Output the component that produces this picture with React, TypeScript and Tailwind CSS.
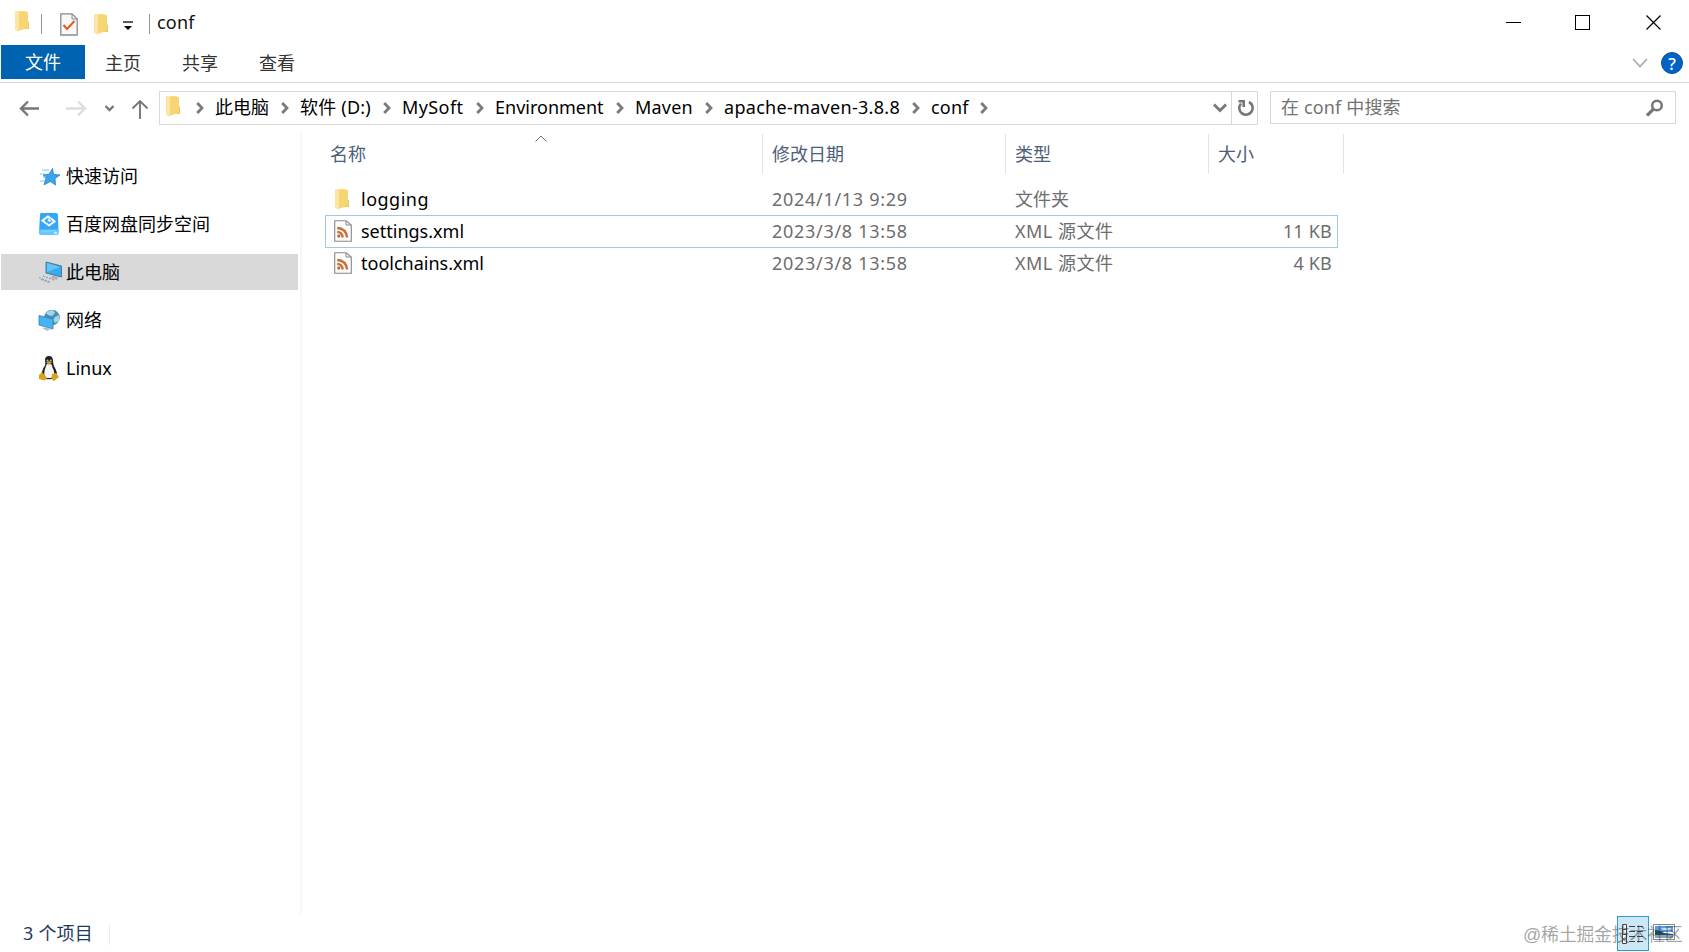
import type { ReactNode } from 'react'

const FONT = "font-['Noto_Sans','Noto_Sans_CJK_SC',sans-serif]"

function FolderIcon() {
  return (
    <svg width="16" height="21" viewBox="0 0 16 21" className="shrink-0">
      <path d="M1 0H12V16L4 19H1Z" fill="#f9dd87" />
      <path d="M11 9L15 11V18H9Z" fill="#efc75e" />
      <path d="M5 1H14V17L4 20Z" fill="#f6d573" />
      <path d="M1 0H5V17L4 21L1 18Z" fill="#fde6a5" />
    </svg>
  )
}

function CheckDocIcon() {
  return (
    <svg width="18" height="23" viewBox="0 0 18 23" className="shrink-0">
      <path d="M.8.8H12L17.2 6V22H.8Z" fill="#f8f8f8" stroke="#8b8b8b" strokeWidth="1.3" />
      <path d="M12 1V6H17" fill="none" stroke="#8b8b8b" />
      <path d="M3.5 12L7 16L14.5 8" fill="none" stroke="#e35a1c" strokeWidth="2" />
    </svg>
  )
}

function XmlIcon() {
  return (
    <svg width="18" height="22" viewBox="0 0 18 22" className="shrink-0">
      <path d="M.7.7H12L17.3 5V21.3H.7Z" fill="#fcfcfc" stroke="#85898d" strokeWidth="1.1" />
      <path d="M12 1V5H17" fill="none" stroke="#85898d" />
      <circle cx="4.8" cy="16" r="1.7" fill="#c96f35" />
      <path d="M3.2 11.8Q8 12 8.8 17.5M3.2 8Q12 8.5 13.2 17.5" fill="none" stroke="#c96f35" strokeWidth="2.3" />
    </svg>
  )
}

function StarIcon() {
  return (
    <svg width="22" height="22" viewBox="0 0 22 22" className="ml-px mt-px">
      <path d="M13.5 2.5L14.5 8.3L21 9L16 12.6L16.5 19L11.5 15.6L5 18.8L7 12.6L4.2 9L10 8.3Z" fill="#3aa5ee" stroke="#2380c9" strokeWidth=".8" />
      <path d="M3 4H10M1 8H6M4 11H7M1 15H6" stroke="#7cc4f2" strokeWidth="1" />
    </svg>
  )
}

function DriveIcon() {
  return (
    <svg width="22" height="24" viewBox="0 0 22 24">
      <path d="M3 1H18Q20 1 20 3L20.5 20Q20.5 23 18 23H4Q1 23 1 20L2 3Q2 1 3 1Z" fill="#35a7fb" />
      <path d="M1 17.5H20.5V20Q20.5 23 18 23H4Q1 23 1 20Z" fill="#65c7ff" />
      <path d="M12.5 6.5L10 4.5L4.5 8.5L8 11.5M8.5 11.5L11 13.5L16.5 9.5L13 6.5M10 7.5L12.5 9.5" fill="none" stroke="white" strokeWidth="2" />
      <path d="M3 19H18" stroke="#9adcff" strokeWidth=".8" />
      <path d="M16 21H19" stroke="white" strokeWidth="1.2" />
    </svg>
  )
}

function PcIcon() {
  return (
    <svg width="24" height="24" viewBox="0 0 24 24">
      <path d="M8 2L23.5 6V17L8 13Z" fill="#36aaf4" stroke="#4c6f86" strokeWidth=".9" />
      <path d="M9 3L22 7L9 12Z" fill="#64c5fb" />
      <path d="M14 15.5V17.5L11 17.5L19 20L20 17Z" fill="#aab2b8" />
      <path d="M1 17.5L12 22M5 16L17 20.5M3 19.5L11 22.5" fill="none" stroke="#8c959c" strokeDasharray="2 1.2" />
    </svg>
  )
}

function NetworkIcon() {
  return (
    <svg width="23" height="24" viewBox="0 0 23 24">
      <circle cx="14" cy="9.5" r="7.8" fill="#4b8fb5" />
      <path d="M8 5Q11 2 15 2L17 5L14 8L10 7ZM17 9L21 7L21 13L17 15L15 12Z" fill="#9fd7e6" />
      <path d="M1 7.5L15 11V21L1 17Z" fill="#45b3f5" stroke="#347fae" strokeWidth=".8" />
      <path d="M4 20L8 19.5L13 21L9 23Z" fill="#b6bec3" />
    </svg>
  )
}

function TuxIcon() {
  return (
    <svg width="22" height="25" viewBox="0 0 22 25">
      <path d="M7 4Q7 0 11 0Q15 0 15 5Q15 9 17 12Q20 17 18 20Q14 24 11 23Q7 24 4 20Q3 16 6 11Q8 9 7 4Z" fill="#202124" />
      <path d="M8.5 8.5Q11 7 13.5 8.5Q14.5 12 16 15Q17 20 13 22H8Q5 18 7 13Z" fill="#f4f4f4" />
      <path d="M8 6.5L11 5L14 6.5L11 9Z" fill="#d69b20" />
      <circle cx="9.5" cy="4.5" r="1" fill="#bbb" />
      <circle cx="12.8" cy="4.5" r="1" fill="#bbb" />
      <path d="M1 19L4 16L9 22Q8 25 5 24L1 23ZM14 18L18 17L21 21L16 25Q13 24 14 18Z" fill="#d9a21b" />
    </svg>
  )
}

function Chevron() {
  return (
    <svg width="8" height="12" viewBox="0 0 8 12" className="shrink-0">
      <path d="M1.2 1L6 6L1.2 11" fill="none" stroke="#7a7a7a" strokeWidth="2.8" />
    </svg>
  )
}

// Widths are the text slot plus the gap up to the next chevron
const CRUMBS = [
  { name: '此电脑', size: 'w-[85px]' },
  { name: '软件 (D:)', size: 'w-[102px] tracking-[.2px]' },
  { name: 'MySoft', size: 'w-[93px] tracking-[.4px]' },
  { name: 'Environment', size: 'w-[140px]' },
  { name: 'Maven', size: 'w-[89px] tracking-[.2px]' },
  { name: 'apache-maven-3.8.8', size: 'w-[207px] tracking-[.3px]' },
  { name: 'conf', size: 'w-[68px] tracking-[.2px]' },
]

const SIDEBAR: { name: string; icon: ReactNode; active?: boolean }[] = [
  { name: '快速访问', icon: <StarIcon /> },
  { name: '百度网盘同步空间', icon: <DriveIcon /> },
  { name: '此电脑', icon: <PcIcon />, active: true },
  { name: '网络', icon: <NetworkIcon /> },
  { name: 'Linux', icon: <TuxIcon /> },
]

const FILES = [
  { name: 'logging', tracking: 'tracking-[.5px]', date: '2024/1/13 9:29', type: '文件夹', size: '', folder: true },
  { name: 'settings.xml', tracking: '', date: '2023/3/8 13:58', type: 'XML 源文件', size: '11 KB', selected: true },
  { name: 'toolchains.xml', tracking: '', date: '2023/3/8 13:58', type: 'XML 源文件', size: '4 KB' },
]

function TitleBar() {
  return (
    <header className="flex h-[45px] items-center">
      <div className="flex h-full flex-1 items-center pb-px">
        <div className="ml-[14px] flex h-[22px]"><FolderIcon /></div>
        <div className="ml-[11px] mt-1 h-5 w-px bg-[#909090]" />
        <div className="ml-[18px] mt-1 flex"><CheckDocIcon /></div>
        <div className="ml-[15px] mt-1 flex"><FolderIcon /></div>
        <svg width="10" height="10" viewBox="0 0 10 10" className="ml-[14px] mt-2">
          <path d="M0 1H10" stroke="black" strokeWidth="1.3" />
          <path d="M1 5H9L5 9Z" fill="black" />
        </svg>
        <div className="ml-4 mt-1 h-5 w-px bg-[#909090]" />
        <span className="ml-[7px] tracking-[.2px]">conf</span>
      </div>
      <svg width="156" height="18" viewBox="0 0 156 18" className="mr-[27px] mb-px" fill="none" stroke="black">
        <path d="M0 9.5H15M69.5 2.5H83.5V16.5H69.5Z" shapeRendering="crispEdges" />
        <path d="M140.5 2.5L154.5 16.5M154.5 2.5L140.5 16.5" strokeWidth="1.2" />
      </svg>
    </header>
  )
}

function RibbonTabs() {
  return (
    <nav className="flex h-[38px] border-b border-[#dadbdc] text-[#333]">
      <div className="ml-px flex h-[34px] w-[84px] items-center justify-center bg-[#0063b1] text-white">文件</div>
      <div className="flex h-[36px] items-center gap-[41px] pl-[20px]">
        <span>主页</span>
        <span>共享</span>
        <span>查看</span>
      </div>
      <div className="ml-auto flex h-[36px] items-center gap-[13px] pr-[6px]">
        <svg width="16" height="10" viewBox="0 0 16 10"><path d="M1 1L8 8.5L15 1" fill="none" stroke="#aaa" strokeWidth="1.8" /></svg>
        <div className="flex h-[22px] w-[22px] items-center justify-center rounded-full border border-[#0b4f8c] bg-[#0063c9] text-[17px] font-medium leading-none text-white">?</div>
      </div>
    </nav>
  )
}

function AddressBar() {
  return (
    <div className="flex h-[50px] items-start pt-[8px]">
      <svg width="159" height="34" viewBox="0 0 159 34" fill="none" stroke="#777">
        <path d="M39 17.5H21M28 10.5L21 17.5L28 24.5" strokeWidth="2.4" />
        <path d="M66 17.5H85M78 10.5L85 17.5L78 24.5" stroke="#ddd" strokeWidth="2.4" />
        <path d="M105.5 15L109.5 19L113.5 15" strokeWidth="2.4" />
        <path d="M140 28V10M132.5 17.5L140 10L147.5 17.5" strokeWidth="1.9" />
      </svg>
      <div className="flex h-[34px] w-[1099px] items-center border border-[#d9d9d9] text-black">
        <div className="ml-[5px] mb-[3px] flex"><FolderIcon /></div>
        <div className="ml-[15px] flex items-center">
          <Chevron />
          {CRUMBS.map((crumb) => (
            <div key={crumb.name} className={`flex items-center justify-between whitespace-nowrap ${crumb.size}`}>
              <span className="-mt-[3px] ml-[11px]">{crumb.name}</span>
              <Chevron />
            </div>
          ))}
        </div>
        <div className="ml-auto flex h-full items-center">
          <svg width="14" height="10" viewBox="0 0 14 10" className="mr-[4px]"><path d="M1 1.5L7 7.5L13 1.5" fill="none" stroke="#777" strokeWidth="2.8" /></svg>
          <div className="flex h-full w-[26px] items-center justify-center border-l border-[#d9d9d9] pl-[2px]">
            <svg width="18" height="18" viewBox="0 0 18 18" fill="none" stroke="#777" strokeWidth="2.6">
              <path d="M12 3A6.7 6.7 0 1 1 4 4.5M1.5 2.3H6.7V8" />
            </svg>
          </div>
        </div>
      </div>
      <div className="ml-[12px] flex h-[33px] w-[406px] items-center justify-between border border-[#d9d9d9] pl-[10px] pr-[11px] text-[#737373]">
        <span className="-mt-px tracking-[.15px]">在 conf 中搜索</span>
        <svg width="18" height="18" viewBox="0 0 18 18" fill="none" stroke="#777">
          <circle cx="11" cy="6.5" r="4.8" strokeWidth="2.5" />
          <path d="M7.5 10L1 16.5" strokeWidth="3.2" />
        </svg>
      </div>
    </div>
  )
}

function Sidebar() {
  return (
    <aside className="flex w-[302px] shrink-0 flex-col gap-[12px] border-r-2 border-[#f7f7f7] pt-[25px] text-black">
      {SIDEBAR.map((item) => (
        <div key={item.name} className={`ml-px flex h-9 w-[297px] items-center pl-[37px] ${item.active ? 'bg-[#d9d9d9]' : ''}`}>
          <div className="flex w-[28px] shrink-0">{item.icon}</div>
          <span>{item.name}</span>
        </div>
      ))}
    </aside>
  )
}

function FileList() {
  return (
    <main className="flex-1 pl-[23px]">
      <div className="relative flex h-[41px] w-[1019px] pt-px text-[#4c607a]">
        <svg width="12" height="7" viewBox="0 0 12 7" className="absolute left-[210px] top-[2px]"><path d="M.5 6.5L6 1L11.5 6.5" fill="none" stroke="#777" /></svg>
        <div className="flex w-[438px] items-center border-r border-[#e3e3e3] pl-[5px]">名称</div>
        <div className="flex w-[243px] items-center border-r border-[#e3e3e3] pl-[9px]">修改日期</div>
        <div className="flex w-[203px] items-center border-r border-[#e3e3e3] pl-[9px]">类型</div>
        <div className="flex w-[135px] items-center border-r border-[#e3e3e3] pl-[9px]">大小</div>
      </div>
      <div className="mt-[9px]">
        {FILES.map((file) => (
          <div key={file.name} className={`-mb-px flex h-[33px] w-[1013px] items-center border text-[#6d6d6d] ${file.selected ? 'border-[#9bcbe2]' : 'border-transparent'}`}>
            <div className="flex w-[438px] items-center pl-[8px] text-black">
              <div className="-mt-px flex w-[27px]">{file.folder ? <FolderIcon /> : <XmlIcon />}</div>
              <span className={`-mt-px ${file.tracking}`}>{file.name}</span>
            </div>
            <div className="-mt-px w-[243px] pl-[8px] tracking-[.7px]">{file.date}</div>
            <div className={`-mt-px w-[203px] pl-[8px] ${file.folder ? '' : 'tracking-[.5px]'}`}>{file.type}</div>
            <div className="-mt-px flex-1 pr-[5px] text-right tracking-[.2px]">{file.size}</div>
          </div>
        ))}
      </div>
    </main>
  )
}

function StatusBar() {
  return (
    <footer className="relative flex h-[38px] items-start text-[#1e395b]">
      <span className="ml-[23px] mt-[6px] w-[73px] tracking-[.2px]">3 个项目</span>
      <div className="ml-[13px] mt-[9px] h-[22px] w-px bg-[#eee]" />
      <div className="ml-auto mt-[2px] flex items-center pr-[14px]">
        <div className="flex h-[35px] w-[32px] items-center justify-center border border-[#3399cc] bg-[#cce8f6]">
          <svg width="24" height="22" viewBox="0 0 24 22" fill="none" stroke="#444">
            <path d="M1.5 1.5H5.5V20.5H1.5ZM1.5 6.5H5.5M1.5 11.5H5.5M1.5 16H5.5" fill="white" />
            <path d="M8 3.5H14M16 3.5H22M8 8.5H14M16 8.5H22M8 13.5H14M16 13.5H22M8 18.5H14M16 18.5H22" />
          </svg>
        </div>
        <svg width="22" height="16" viewBox="0 0 22 16" className="mb-1 ml-[4px]">
          <rect x=".5" y=".5" width="21" height="15" fill="white" stroke="#888" />
          <rect x="2" y="2" width="18" height="6" fill="#579ce8" />
          <path d="M8 4H18V6H10Z" fill="#c5def5" />
          <path d="M2 6Q7 6 11 9L20 10V12H2Z" fill="#314c48" />
          <path d="M2 11H20V14H2Z" fill="#7aa8c7" />
        </svg>
      </div>
      <div className="absolute left-[1523px] top-[8px] whitespace-nowrap font-['Liberation_Sans','Noto_Sans_CJK_SC',sans-serif] tracking-[-.3px] text-[#333]/45">
        @稀土掘金技术社区
      </div>
    </footer>
  )
}

export default function App() {
  return (
    <div className={`flex h-[952px] w-[1689px] flex-col overflow-hidden bg-white text-[18px] leading-[26px] text-[#111] ${FONT}`}>
      <TitleBar />
      <RibbonTabs />
      <AddressBar />
      <div className="flex min-h-0 flex-1">
        <Sidebar />
        <FileList />
      </div>
      <StatusBar />
    </div>
  )
}
